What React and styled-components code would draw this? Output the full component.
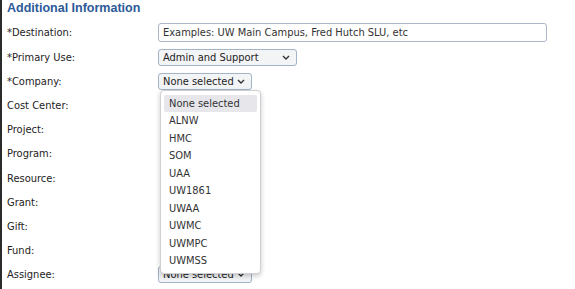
import React from "react";
import styled, { createGlobalStyle } from "styled-components";

const GlobalStyle = createGlobalStyle`
  html, body {
    margin: 0;
    padding: 0;
    background: #fff;
    overflow: hidden;
  }
`;

const Page = styled.div`
  width: 575px;
  height: 289px;
  box-sizing: border-box;
  border-left: 2px solid #2b2b2b;
  padding-left: 5px;
  font-family: "DejaVu Sans Condensed", "DejaVu Sans", Verdana, sans-serif;
  font-size: 11px;
  color: #222;
`;

const Title = styled.h2`
  margin: 0;
  height: 19px;
  line-height: 16px;
  font-family: "Liberation Sans", Arial, sans-serif;
  font-size: 12.5px;
  font-weight: 700;
  color: #2d5a98;
`;

const Row = styled.div`
  display: flex;
  align-items: center;
  height: ${(p) => p.$h || 24}px;
`;

const Label = styled.div`
  width: 151px;
  flex: none;
`;

const Field = styled.div`
  position: relative;
`;

const TextInput = styled.input`
  box-sizing: border-box;
  width: 389px;
  height: 19px;
  padding: 0 4px;
  border: 1px solid #a9b7c9;
  border-radius: 3px;
  font: inherit;
  color: #333;
  outline: none;
  &::placeholder {
    color: #333;
    opacity: 1;
  }
`;

const Select = styled.div`
  box-sizing: border-box;
  width: ${(p) => p.$w}px;
  height: 17px;
  display: flex;
  align-items: center;
  justify-content: space-between;
  padding: 0 6px 0 4px;
  border: 1px solid #a3b3c8;
  border-radius: 3px;
  background: #f3f4f6;
  color: #222;
`;

const Menu = styled.div`
  position: absolute;
  top: 17px;
  left: 2px;
  width: 101px;
  box-sizing: border-box;
  padding: 4px 3px 3px;
  background: #fff;
  border: 1px solid #cfcfd4;
  border-radius: 4px;
  box-shadow: 0 2px 5px rgba(0, 0, 0, 0.22);
  z-index: 2;
`;

const Option = styled.div`
  height: 17.5px;
  line-height: 17.5px;
  padding-left: 5px;
  border-radius: 2px;
  color: #333;
  background: ${(p) => (p.$active ? "#e6e6eb" : "transparent")};
`;

function Chevron() {
  return (
    <svg width="8" height="5" viewBox="0 0 8 5">
      <path d="M1 1 L4 4 L7 1" fill="none" stroke="#333" strokeWidth="1.4" />
    </svg>
  );
}

const companies = [
  "None selected",
  "ALNW",
  "HMC",
  "SOM",
  "UAA",
  "UW1861",
  "UWAA",
  "UWMC",
  "UWMPC",
  "UWMSS",
];

const plainRows = ["Cost Center:", "Project:", "Program:", "Resource:", "Grant:", "Gift:", "Fund:"];

export default function App() {
  return (
    <>
      <GlobalStyle />
      <Page>
        <Title>Additional Information</Title>
        <Row $h={26}>
          <Label>*Destination:</Label>
          <TextInput placeholder="Examples: UW Main Campus, Fred Hutch SLU, etc" />
        </Row>
        <Row>
          <Label>*Primary Use:</Label>
          <Select $w={139}>
            <span>Admin and Support</span>
            <Chevron />
          </Select>
        </Row>
        <Row $h={24.5}>
          <Label>*Company:</Label>
          <Field>
            <Select $w={94}>
              <span>None selected</span>
              <Chevron />
            </Select>
            <Menu>
              {companies.map((c, i) => (
                <Option key={c} $active={i === 0}>
                  {c}
                </Option>
              ))}
            </Menu>
          </Field>
        </Row>
        {plainRows.map((r) => (
          <Row key={r} $h={24.2}>
            <Label>{r}</Label>
          </Row>
        ))}
        <Row>
          <Label>Assignee:</Label>
          <Select $w={94}>
            <span>None selected</span>
            <Chevron />
          </Select>
        </Row>
      </Page>
    </>
  );
}
